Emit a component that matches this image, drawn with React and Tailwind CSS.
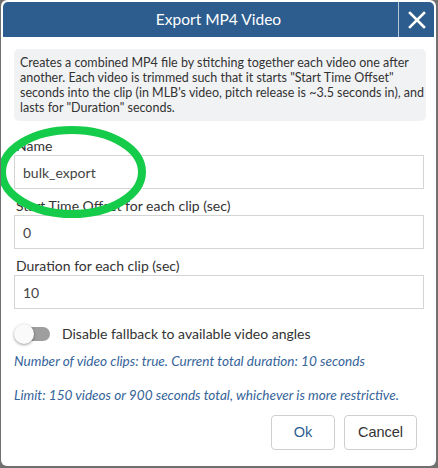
import React from 'react';

const font = { fontFamily: 'Lato, "Open Sans", sans-serif' };

function Field({ label, value }) {
  return (
    <div className="flex flex-col">
      <label className="pl-[2px] text-[14px] leading-[18px] text-[#333]">{label}</label>
      <div className="flex h-[34px] w-[410px] items-center border border-[#d4d4d4] bg-white px-[8px] text-[14px] text-[#444]">
        {value}
      </div>
    </div>
  );
}

export default function App() {
  return (
    <div className="h-[468px] w-[438px] bg-[#707070]" style={font}>
      <div className="relative ml-[1px] h-[466px] w-[435px] overflow-hidden rounded-[6px] bg-white p-[2px]">
        {/* Header */}
        <div className="flex h-[35px] rounded-t-[5px] bg-[#2c5d8e]">
          <div className="flex flex-1 items-center justify-center pl-[36px] text-[15.5px] text-white">Export MP4 Video</div>
          <button className="flex w-[36px] items-center justify-center border-l border-[#b8c8d8]">
            <svg width="18" height="18" viewBox="0 0 18 18">
              <path d="M2 2 L16 16 M16 2 L2 16" stroke="white" strokeWidth="2.6" strokeLinecap="square" />
            </svg>
          </button>
        </div>

        {/* Body */}
        <div className="flex flex-col px-[11px]">
          <div className="mt-[12px] w-[412px] rounded-[5px] bg-[#f1f2f4] py-[6px] pl-[6px] pr-[2px] text-[12.5px] leading-[15px] text-[#333]">
            Creates a combined MP4 file by stitching together each video one after another. Each video is trimmed such that it starts "Start Time Offset" seconds into the clip (in MLB's video, pitch release is ~3.5 seconds in), and lasts for "Duration" seconds.
          </div>

          <div className="mt-[16px] flex flex-col gap-[8px]">
            <Field label="Name" value="bulk_export" />
            <Field label="Start Time Offset for each clip (sec)" value="0" />
            <Field label="Duration for each clip (sec)" value="10" />
          </div>

          <div className="mt-[14px] flex items-center gap-[11px]">
            <div className="relative h-[20px] w-[37px]">
              <div className="absolute left-[8px] top-[3px] h-[14px] w-[28px] rounded-full bg-[#9e9e9e]" />
              <div className="absolute left-0 top-0 h-[20px] w-[20px] rounded-full bg-[#fafafa] shadow-[0_1px_3px_rgba(0,0,0,0.4)]" />
            </div>
            <span className="text-[14px] text-[#333]">Disable fallback to available video angles</span>
          </div>

          <p className="mt-[8px] text-[13.6px] italic leading-[18px] text-[#35649a]">
            Number of video clips: true. Current total duration: 10 seconds
          </p>
          <p className="mt-[16px] text-[13.6px] italic leading-[18px] text-[#35649a]">
            Limit: 150 videos or 900 seconds total, whichever is more restrictive.
          </p>

          <div className="mt-[11px] flex justify-end gap-[9px] pr-[6px]" style={{ fontFamily: '"Liberation Sans", Arial, sans-serif' }}>
            <button className="h-[35px] w-[64px] rounded-[4px] border border-[#cfcfcf] bg-white text-[14.5px] text-[#2c5d8e]">Ok</button>
            <button className="h-[35px] w-[73px] rounded-[4px] border border-[#cfcfcf] bg-white text-[14.5px] text-[#333]">Cancel</button>
          </div>
        </div>

        {/* Green annotation circle */}
        <svg className="pointer-events-none absolute left-[-6px] top-[122px]" width="160" height="100" viewBox="0 0 160 100">
          <ellipse cx="77" cy="50" rx="70" ry="42" fill="none" stroke="#14cc4a" strokeWidth="8" />
        </svg>
      </div>
    </div>
  );
}
